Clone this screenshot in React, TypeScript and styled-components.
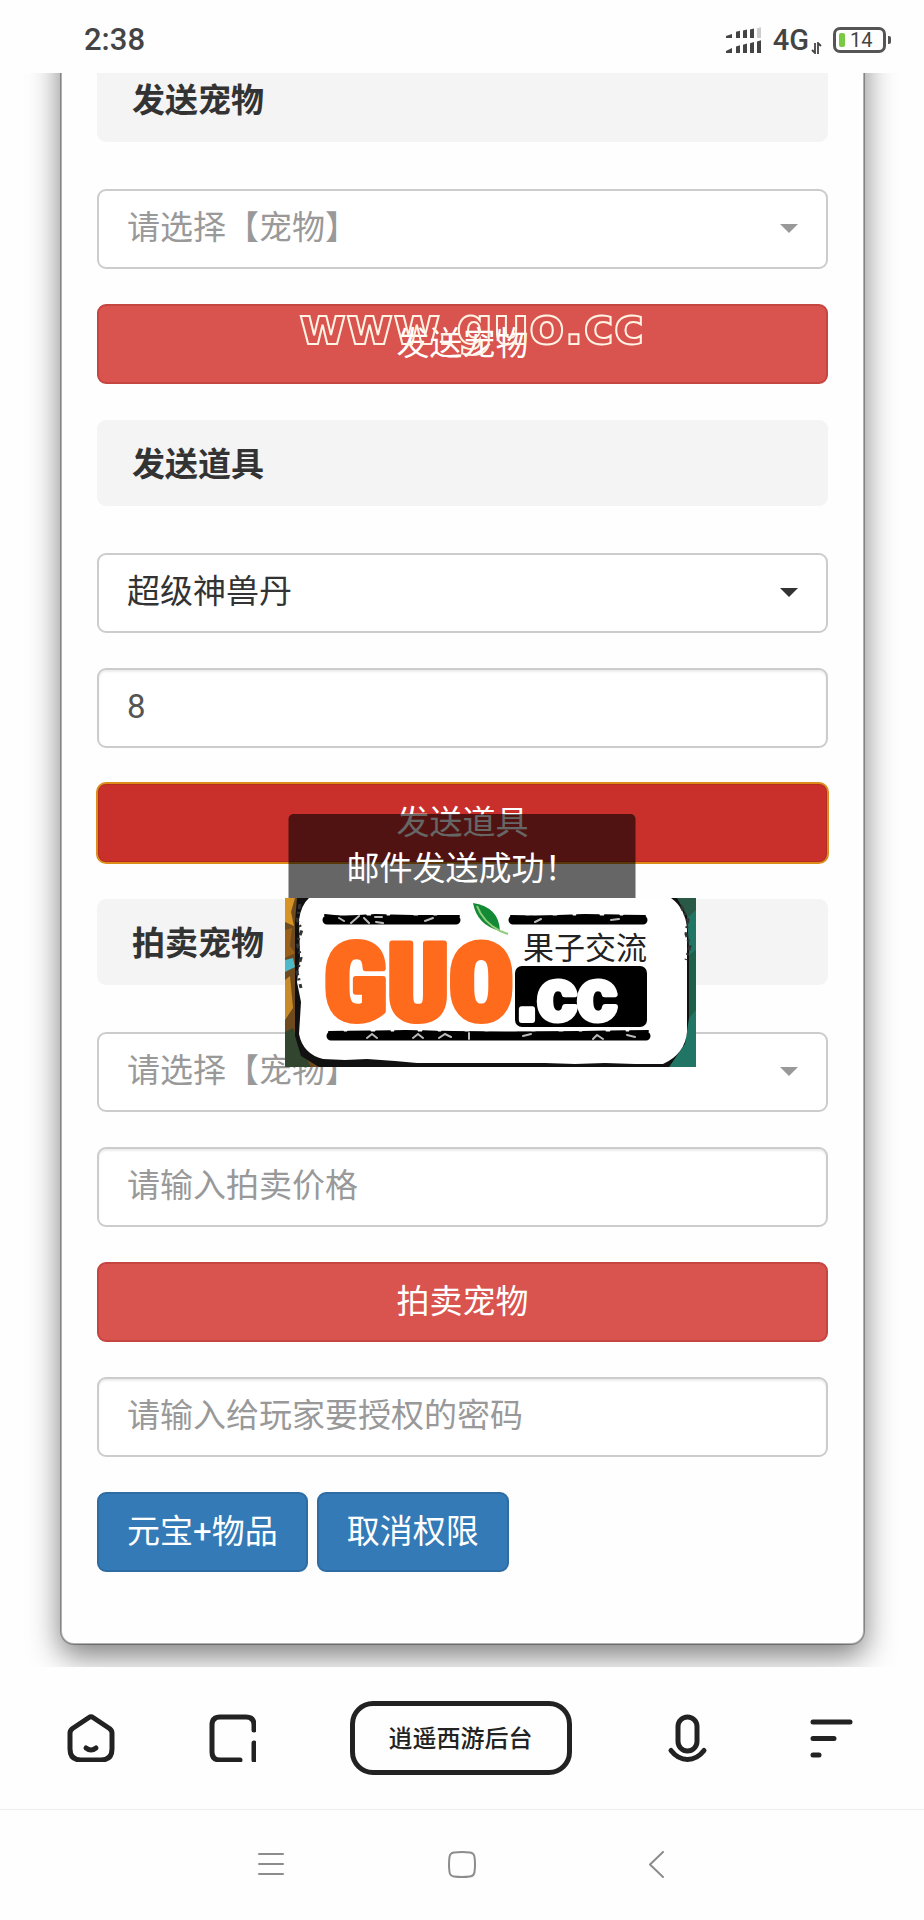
import React from "react";
import styled, { createGlobalStyle } from "styled-components";

const GlobalStyle = createGlobalStyle`
  *, *::before, *::after { box-sizing: border-box; }
  body {
    margin: 0;
    background: #fefefe;
    color: #333;
    font-family: Roboto, "Noto Sans CJK SC", sans-serif;
    font-size: 33px;
    line-height: 48px;
  }
  button, input, select { font: inherit; color: inherit; margin: 0; }
`;

const Screen = styled.div`
  display: flex;
  flex-direction: column;
  min-height: 100vh;
`;

const StatusBar = styled.header`
  display: flex;
  align-items: center;
  justify-content: space-between;
  height: 73px;
  padding: 6px 33px 0 84px;
  color: #444;
`;

const Clock = styled.time`
  font-size: 31px;
  font-weight: 500;
  line-height: 36px;
`;

const StatusIcons = styled.div`
  display: flex;
  align-items: center;
  gap: 11px;
`;

const Network = styled.span`
  display: flex;
  align-items: flex-end;
  gap: 2px;
  font-size: 29px;
  font-weight: 500;
  line-height: 28px;
`;

const Battery = styled.span`
  position: relative;
  display: flex;
  align-items: center;
  gap: 5px;
  width: 53px;
  height: 26px;
  margin-right: 5px;
  padding-left: 3px;
  border: 3px solid #555;
  border-radius: 7px;
  font-size: 20px;
  line-height: 20px;

  &::before {
    content: "";
    width: 6px;
    height: 14px;
    border-radius: 2px;
    background: #7ac943;
  }

  &::after {
    content: "";
    position: absolute;
    right: -8px;
    top: 6px;
    width: 3px;
    height: 8px;
    border-radius: 0 2px 2px 0;
    background: #555;
  }
`;

const Viewport = styled.main`
  position: relative;
  overflow: hidden;
  padding: 0 59px 22px 60px;
`;

const Card = styled.form`
  display: flex;
  flex-direction: column;
  gap: 36px;
  margin-top: -42px;
  padding: 23px 35px 71px;
  border: 2px solid rgba(0, 0, 0, 0.3);
  border-radius: 14px;
  background: #fefefe;
  background-clip: padding-box;
  box-shadow: 0 11px 30px rgba(0, 0, 0, 0.5);
`;

const Section = styled.section`
  display: flex;
  flex-direction: column;
  gap: 35px;
`;

const SectionTitle = styled.h2`
  margin: 0 0 12px;
  padding: 21px 35px 17px;
  border-radius: 9px;
  background: #f4f4f4;
  font-size: 33px;
  font-weight: 700;
  line-height: 48px;
`;

const SelectBox = styled.div<{ $muted?: boolean }>`
  position: relative;
  display: flex;
  color: ${(p) => (p.$muted ? "#999" : "#333")};

  &::after {
    content: "";
    position: absolute;
    right: 30px;
    top: 35px;
    border: 9px solid transparent;
    border-top-color: currentColor;
    border-bottom-width: 0;
    pointer-events: none;
  }
`;

const Select = styled.select`
  appearance: none;
  flex: 1;
  min-width: 0;
  height: 80px;
  padding: 0 60px 2px 28px;
  border: 2px solid #ccc;
  border-radius: 9px;
  background: #fff;
  outline: none;
`;

const TextField = styled.input`
  width: 100%;
  height: 80px;
  padding: 0 28px 4px;
  border: 2px solid #ccc;
  border-radius: 9px;
  background: #fff;
  box-shadow: inset 0 2px 2px rgba(0, 0, 0, 0.075);
  color: #555;
  outline: none;

  &::placeholder { color: #999; opacity: 1; }
`;

const tones = {
  danger: { fill: "#d9534f", edge: "#c54541" },
  pressed: { fill: "#c9302c", edge: "#b42b20" },
  primary: { fill: "#337ab7", edge: "#2e6da4" },
};

const Button = styled.button<{ $tone: keyof typeof tones }>`
  height: 80px;
  padding: 0 28px;
  border: 2px solid ${(p) => tones[p.$tone].edge};
  border-radius: 9px;
  background: ${(p) => tones[p.$tone].fill};
  color: #fff;
  outline: ${(p) => (p.$tone === "pressed" ? "2px solid #dd8c1c" : "none")};
  outline-offset: -1px;
  cursor: pointer;
`;

const ButtonRow = styled.div`
  display: flex;
  flex-wrap: wrap;
  gap: 9px;
`;

const Toast = styled.div`
  position: absolute;
  top: 741px;
  left: 50%;
  transform: translateX(-50%);
  padding: 31px 58px 29px;
  border-radius: 5px;
  background: rgba(0, 0, 0, 0.6);
  color: #fff;
  white-space: nowrap;
`;

const SiteMark = styled.div`
  position: absolute;
  top: 224px;
  left: calc(50% - 163px);
  color: transparent;
  font-family: "DejaVu Sans", sans-serif;
  font-size: 51px;
  font-weight: 700;
  line-height: 60px;
  -webkit-text-stroke: 2px #fff4e4;
  pointer-events: none;
`;

const LogoBadge = styled.svg`
  position: absolute;
  top: 825px;
  left: calc(50% - 177px);
  width: 411px;
  height: 169px;
`;

const BrowserBar = styled.nav`
  display: flex;
  align-items: center;
  justify-content: space-between;
  height: 143px;
  padding: 0 70px 0 67px;
  border-bottom: 1px solid #eee;
`;

const IconButton = styled.button`
  display: flex;
  padding: 0;
  border: 0;
  background: none;
  cursor: pointer;

  svg {
    fill: none;
    stroke: currentColor;
    stroke-linecap: round;
    stroke-linejoin: round;
  }
`;

const BarButton = styled(IconButton)`
  color: #222;
  svg { stroke-width: 5px; }
`;

const PageButton = styled.button`
  height: 74px;
  padding: 2px 34px 0;
  border: 5px solid #222;
  border-radius: 23px;
  background: none;
  color: #222;
  font-size: 24px;
  font-weight: 500;
  line-height: 32px;
  cursor: pointer;
`;

const SystemBar = styled.nav`
  display: flex;
  align-items: center;
  justify-content: center;
  gap: 164px;
  height: 110px;
`;

const SystemButton = styled(IconButton)`
  color: #8c8c8c;
  svg { stroke-width: 2px; }
`;

function SignalIcon() {
  const xs = [0, 10, 17, 24, 31];
  return (
    <svg width="36" height="26" viewBox="0 0 36 26" fill="#444" aria-hidden="true">
      {xs.map((x, i) => (
        <g key={x}>
          <path
            d={i === 0 ? "M0 11V9L6 7V11Z" : `M${x} 11V${6 - i * 1.2}L${x + 4} ${5 - i * 1.2}V11Z`}
            fill={i === 4 ? "#ccc" : "#444"}
          />
          <path d={i === 0 ? "M0 26V24L6 21V26Z" : `M${x} 26V${21 - i * 1.6}L${x + 4} ${20 - i * 1.7}V26Z`} />
        </g>
      ))}
    </svg>
  );
}

function DataArrows() {
  return (
    <svg width="11" height="12" viewBox="0 0 11 12" fill="none" stroke="#444" strokeWidth="1.8" aria-hidden="true">
      <path d="M4 1V11L1 8M7 12V1L10 4" />
    </svg>
  );
}

function Logo() {
  return (
    <LogoBadge viewBox="0 0 411 169" role="img" aria-label="GUO.cc 果子交流">
      <rect width="210" height="169" fill="#6f4a1e" />
      <rect x="205" width="206" height="169" fill="#207565" />
      <path d="M0 0H10L6 14L9 28L0 24Z" fill="#d69427" />
      <path d="M0 32L7 30L5 48L10 55L0 60Z" fill="#9a5f19" />
      <path d="M0 62L8 60L10 69L0 74Z" fill="#4eb9c8" />
      <path d="M0 82L5 78L8 110L0 122Z" fill="#c98a2a" />
      <path d="M0 134L8 130L16 150L26 169H0Z" fill="#32452f" />
      <path d="M389 0H411V12L402 20Z" fill="#285a46" />
      <path d="M400 60L411 52V112L404 120Z" fill="#1d5f48" />
      <path
        d="M12 0H392L402 18L404 50V120L400 146L384 169H34L16 158L10 138V24Z"
        fill="#111"
      />
      <path
        d="M24 0H386Q400 10 402 30V134Q400 156 378 166H350L320 165L290 166L260 165H132L110 163L82 161L60 162L38 161Q18 156 14 136L16 104L12 84L15 60L14 22Q16 7 24 0Z"
        fill="#fff"
      />
      <path
        d="M15 6L12 22L17 32L12 45L16 60L12 74L16 90M396 8L403 22L401 36L405 48L401 62"
        fill="none"
        stroke="#333"
        strokeWidth="3"
        strokeDasharray="5 3 2 4"
      />
      <g fill="none" stroke="#000" strokeLinecap="round">
        <path d="M42 22H171M228 22H358M46 138H361" strokeWidth="9" />
        <path
          d="M40 17L60 19L90 17L128 18L174 18M226 18L250 19L300 17L360 18M44 134L120 133L220 135L363 133"
          strokeWidth="2"
          strokeDasharray="14 5 22 6"
        />
      </g>
      <g fill="none" stroke="#bbb" strokeLinecap="round">
        <path
          d="M54 20L59 23M66 25L74 18M79 20L84 25M90 19H97M91 24L98 25M140 23L148 20M250 24L256 21M326 22L334 21"
          strokeWidth="2"
        />
        <path
          d="M82 140L87 136L92 140M128 140L133 136L138 140M154 140L160 136L166 139M184 135V141M238 138L246 136M308 141L312 137L318 141M342 137L350 139"
          strokeWidth="2"
        />
      </g>
      <text
        x="39"
        y="122"
        fill="#ff6b1c"
        stroke="#ff6b1c"
        strokeWidth="6"
        strokeLinejoin="round"
        fontFamily="'Roboto Condensed', Roboto, sans-serif"
        fontWeight="900"
        fontSize="107"
      >
        GUO
      </text>
      <path d="M188 5Q214 9 215 33Q192 27 188 5Z" fill="#138a35" />
      <path d="M192 8Q198 24 215 33L223 36" fill="none" stroke="#8fce7c" strokeWidth="2" />
      <text x="238" y="61" fill="#222" fontFamily="'Noto Sans CJK SC', sans-serif" fontSize="31">
        果子交流
      </text>
      <rect x="230" y="68" width="132" height="61" rx="7" fill="#000" />
      <text
        x="232"
        y="122"
        fill="#fff"
        stroke="#fff"
        strokeWidth="6"
        strokeLinejoin="round"
        fontFamily="'Liberation Sans', sans-serif"
        fontWeight="700"
        fontSize="72"
      >
        .cc
      </text>
    </LogoBadge>
  );
}

export default function App() {
  return (
    <>
      <GlobalStyle />
      <Screen>
        <StatusBar>
          <Clock>2:38</Clock>
          <StatusIcons>
            <SignalIcon />
            <Network>
              4G
              <DataArrows />
            </Network>
            <Battery>14</Battery>
          </StatusIcons>
        </StatusBar>

        <Viewport>
          <Card onSubmit={(e) => e.preventDefault()}>
            <Section>
              <SectionTitle id="send-pet">发送宠物</SectionTitle>
              <SelectBox $muted>
                <Select aria-labelledby="send-pet">
                  <option>请选择【宠物】</option>
                </Select>
              </SelectBox>
              <Button type="button" $tone="danger">发送宠物</Button>
            </Section>

            <Section>
              <SectionTitle id="send-item">发送道具</SectionTitle>
              <SelectBox>
                <Select aria-labelledby="send-item">
                  <option>超级神兽丹</option>
                </Select>
              </SelectBox>
              <TextField aria-label="数量" defaultValue="8" />
              <Button type="button" $tone="pressed">发送道具</Button>
            </Section>

            <Section>
              <SectionTitle id="sell-pet">拍卖宠物</SectionTitle>
              <SelectBox $muted>
                <Select aria-labelledby="sell-pet">
                  <option>请选择【宠物】</option>
                </Select>
              </SelectBox>
              <TextField aria-label="拍卖价格" placeholder="请输入拍卖价格" />
              <Button type="button" $tone="danger">拍卖宠物</Button>
              <TextField aria-label="授权密码" placeholder="请输入给玩家要授权的密码" />
              <ButtonRow>
                <Button type="button" $tone="primary">元宝+物品</Button>
                <Button type="button" $tone="primary">取消权限</Button>
              </ButtonRow>
            </Section>
          </Card>

          <SiteMark>www.guo.cc</SiteMark>
          <Toast role="status">邮件发送成功！</Toast>
          <Logo />
        </Viewport>

        <BrowserBar aria-label="浏览器">
          <BarButton type="button" aria-label="主页">
            <svg width="48" height="48" viewBox="0 0 48 48">
              <path d="M22 3.5Q24 2 26 3.5L42.500 14.500Q45 16.500 45 19V35Q45 46 34 46H14Q3 46 3 35V19Q3 16.500 5.500 14.500Z" />
              <path d="M19 34Q24 38 29 34" />
            </svg>
          </BarButton>
          <BarButton type="button" aria-label="窗口">
            <svg width="48" height="48" viewBox="0 0 48 48">
              <path d="M32 46H12Q4 46 4 38V11Q4 3 12 3H38Q46 3 46 11V16M46 29V46" />
            </svg>
          </BarButton>
          <PageButton type="button">逍遥西游后台</PageButton>
          <BarButton type="button" aria-label="语音">
            <svg width="48" height="48" viewBox="0 0 48 48">
              <rect x="13" y="3" width="19" height="34" rx="9.5" />
              <path d="M6 36.500Q13 45.500 22.500 45.500T39 36.500" />
            </svg>
          </BarButton>
          <BarButton type="button" aria-label="菜单">
            <svg width="48" height="48" viewBox="0 0 48 48">
              <path d="M7 8H44M7 24.500H28M7 41H13" />
            </svg>
          </BarButton>
        </BrowserBar>

        <SystemBar aria-label="系统">
          <SystemButton type="button" aria-label="最近任务">
            <svg width="28" height="28" viewBox="0 0 28 28">
              <path d="M3 3H27M3 13H27M3 23H27" />
            </svg>
          </SystemButton>
          <SystemButton type="button" aria-label="桌面">
            <svg width="28" height="28" viewBox="0 0 28 28">
              <path d="M6 1.500Q14 .5 22 1.500Q26 2 26.500 6Q27.500 13.500 26.500 21Q26 25 22 25.500Q14 26.500 6 25.500Q2 25 1.500 21Q.5 13.500 1.500 6Q2 2 6 1.500Z" />
            </svg>
          </SystemButton>
          <SystemButton type="button" aria-label="返回">
            <svg width="28" height="28" viewBox="0 0 28 28">
              <path d="M23 1L10 13.500L23 26" />
            </svg>
          </SystemButton>
        </SystemBar>
      </Screen>
    </>
  );
}
